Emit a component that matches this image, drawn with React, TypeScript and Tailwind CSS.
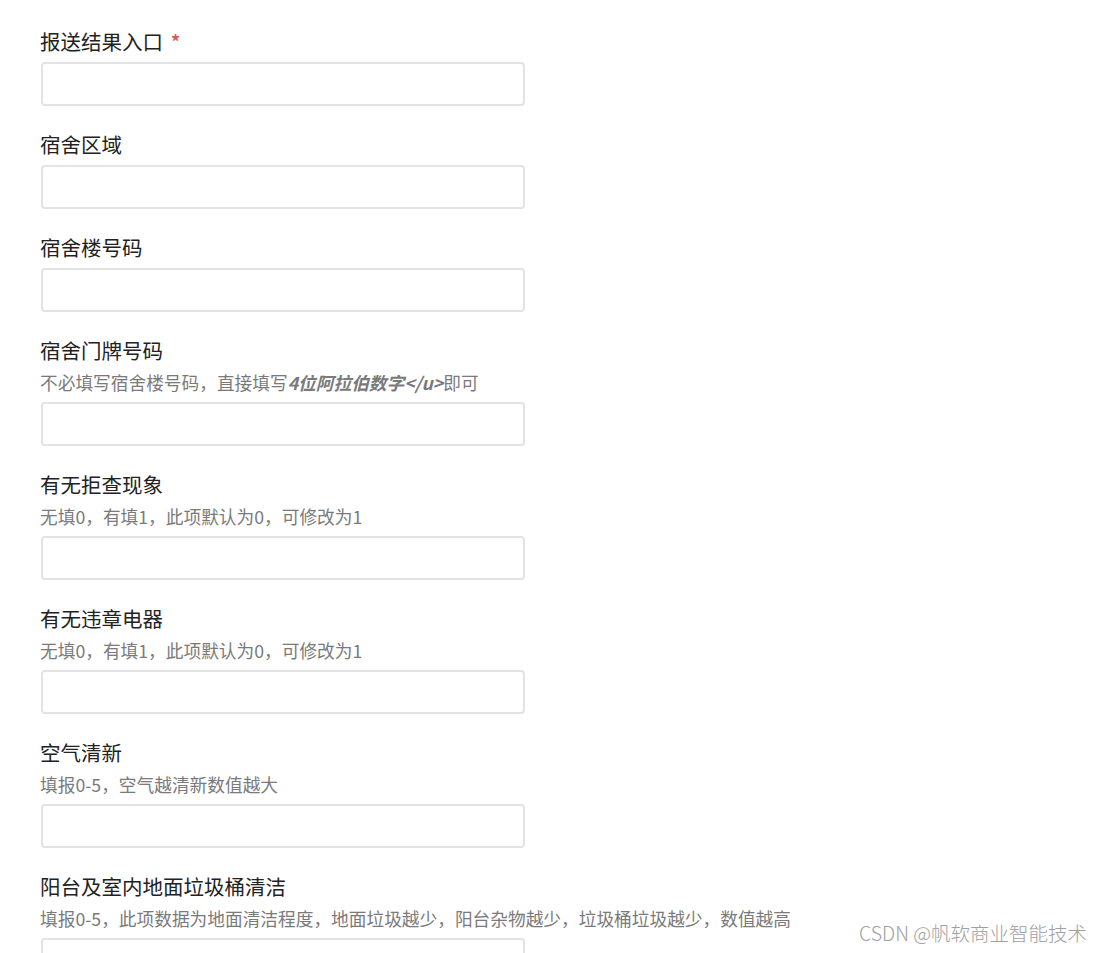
import React from 'react';

interface Field {
  label: string;
  required?: boolean;
  hint?: React.ReactNode;
}

const fields: Field[] = [
  { label: '报送结果入口', required: true },
  { label: '宿舍区域' },
  { label: '宿舍楼号码' },
  {
    label: '宿舍门牌号码',
    hint: (
      <>
        不必填写宿舍楼号码，直接填写<b className="italic font-bold">4位阿拉伯数字&lt;/u&gt;</b>即可
      </>
    ),
  },
  { label: '有无拒查现象', hint: '无填0，有填1，此项默认为0，可修改为1' },
  { label: '有无违章电器', hint: '无填0，有填1，此项默认为0，可修改为1' },
  { label: '空气清新', hint: '填报0-5，空气越清新数值越大' },
  {
    label: '阳台及室内地面垃圾桶清洁',
    hint: '填报0-5，此项数据为地面清洁程度，地面垃圾越少，阳台杂物越少，垃圾桶垃圾越少，数值越高',
  },
];

const font = { fontFamily: '"Noto Sans CJK SC", "Noto Sans", "Liberation Sans", sans-serif' };

function FormField({ field }: { field: Field }) {
  return (
    <div className="flex flex-col">
      <label className="text-[20.5px] leading-[30px] text-[#222] flex items-center gap-2">
        <span>{field.label}</span>
        {field.required && <span className="text-[#e0575b] font-bold text-[18px]">*</span>}
      </label>
      {field.hint ? (
        <p className="text-[17.7px] leading-[24px] text-[#7a7a7a] mt-[5px] mb-[8px] whitespace-nowrap">
          {field.hint}
        </p>
      ) : (
        <div className="h-[6px]" />
      )}
      <input
        type="text"
        className="ml-px w-[484px] h-[44px] shrink-0 border-2 border-[#e3e3e3] rounded-[4px] bg-white outline-none"
      />
    </div>
  );
}

export default function App() {
  return (
    <div className="relative w-[1103px] h-[953px] bg-white overflow-hidden" style={font}>
      <div className="flex flex-col gap-[23px] pl-[40px] pt-[26px]">
        {fields.map((f) => (
          <FormField key={f.label} field={f} />
        ))}
      </div>
      <div className="absolute right-[16px] bottom-[6px] text-[19.5px] text-[#a0a0a0] font-light">
        CSDN @帆软商业智能技术
      </div>
    </div>
  );
}
